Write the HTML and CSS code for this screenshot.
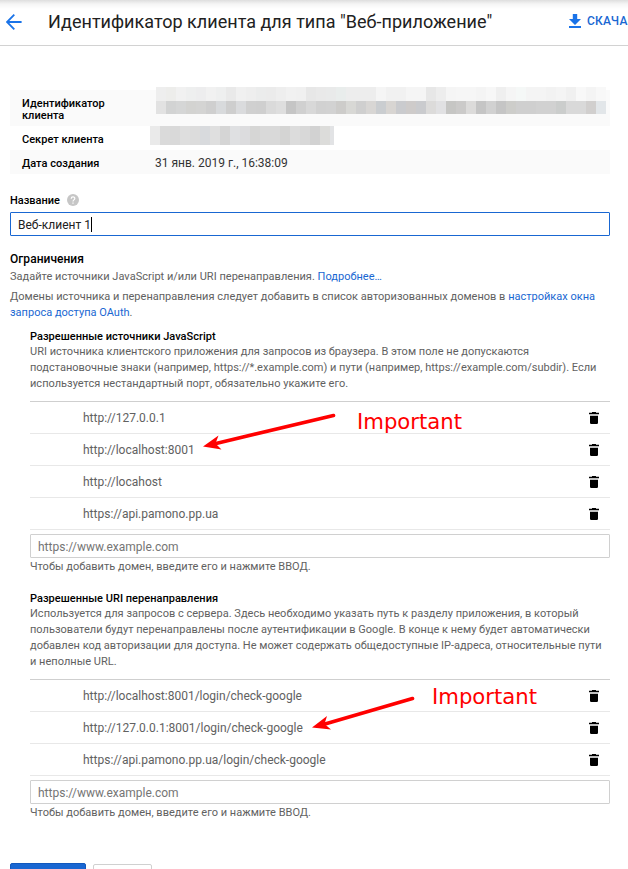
FILE: index.html
```html
<!DOCTYPE html>
<html lang="ru">
<head>
<meta charset="utf-8">
<title>Идентификатор клиента</title>
<link rel="stylesheet" href="styles.css">
</head>
<body>
<svg class="defs" width="0" height="0">
  <symbol id="trash" viewBox="0 0 10 12"><path d="M3 0h4v.7h3v1.600H0V.7h3zM1 3.700h8v7.100q0 1.200-1.200 1.200H2.200Q1 12 1 10.800z"/></symbol>
</svg>
<header class="topbar">
  <svg class="back" width="16" height="16" viewBox="0 0 16 16"><path d="M15.600 8H1.600M8.300 .7L1 8l7.300 7.300" fill="none" stroke="#1a73e8" stroke-width="1.800"/></svg>
  <h1>Идентификатор клиента для типа "Веб-приложение"</h1>
  <a class="download"><svg width="12" height="14" viewBox="0 0 12 14"><path d="M3.800 0h4.400v5H12l-6 6-6-6h3.800zM0 12h12v2H0z" fill="#1a73e8"/></svg><span>СКАЧА</span></a>
</header>
<main>
  <dl class="info">
    <div class="info-row shaded tall"><dt>Идентификатор клиента</dt><dd>
      <svg class="mask mask-id" width="456" height="28" viewBox="0 0 456 28" shape-rendering="crispEdges"></svg>
    </dd></div>
    <div class="info-row"><dt>Секрет клиента</dt><dd>
      <svg class="mask mask-secret" width="184" height="19" viewBox="0 0 184 19" shape-rendering="crispEdges"></svg>
    </dd></div>
    <div class="info-row shaded"><dt>Дата создания</dt><dd>31 янв. 2019 г., 16:38:09</dd></div>
  </dl>
  <div class="label">Название <svg class="help" width="12" height="12" viewBox="0 0 12 12"><circle cx="6" cy="6" r="6" fill="#c6c6c6"/><path d="M4.200 4.700C4.200 2.300 7.800 2.300 7.800 4.600 7.800 5.900 6 5.900 6 7.400M6 8.400v1.300" fill="none" stroke="#fff" stroke-width="1.200"/></svg></div>
  <div class="field focused"><span>Веб-клиент 1</span><i class="caret"></i></div>
  <h2>Ограничения</h2>
  <p class="intro">Задайте источники JavaScript и/или URI перенаправления. <a>Подробнее…</a></p>
  <p class="domains">Домены источника и перенаправления следует добавить в список авторизованных доменов в <a>настройках окна<br>запроса доступа OAuth</a>.</p>
  <section class="origins">
    <h3>Разрешенные источники JavaScript</h3>
    <p>URI источника клиентского приложения для запросов из браузера. В этом поле не допускаются<br>подстановочные знаки (например, https://*.example.com) и пути (например, https://example.com/subdir). Если<br>используется нестандартный порт, обязательно укажите его.</p>
    <ul>
      <li>http://127.0.0.1<svg class="trash"><use href="#trash"/></svg></li>
      <li>http://localhost:8001<svg class="trash"><use href="#trash"/></svg></li>
      <li>http://locahost<svg class="trash"><use href="#trash"/></svg></li>
      <li>https://api.pamono.pp.ua<svg class="trash"><use href="#trash"/></svg></li>
    </ul>
    <div class="field placeholder">https://www.example.com</div>
    <p class="hint">Чтобы добавить домен, введите его и нажмите ВВОД.</p>
  </section>
  <section class="redirects">
    <h3>Разрешенные URI перенаправления</h3>
    <p>Используется для запросов с сервера. Здесь необходимо указать путь к разделу приложения, в который<br>пользователи будут перенаправлены после аутентификации в Google. В конце к нему будет автоматически<br>добавлен код авторизации для доступа. Не может содержать общедоступные IP-адреса, относительные пути<br>и неполные URL.</p>
    <ul>
      <li>http://localhost:8001/login/check-google<svg class="trash"><use href="#trash"/></svg></li>
      <li>http://127.0.0.1:8001/login/check-google<svg class="trash"><use href="#trash"/></svg></li>
      <li>https://api.pamono.pp.ua/login/check-google<svg class="trash"><use href="#trash"/></svg></li>
    </ul>
    <div class="field placeholder">https://www.example.com</div>
    <p class="hint">Чтобы добавить домен, введите его и нажмите ВВОД.</p>
  </section>
  <div class="actions"><span class="btn primary"></span><span class="btn"></span></div>
</main>
<svg class="arrows" width="628" height="869" viewBox="0 0 628 869">
  <path d="M333.500 415.500L216 443.500M412.500 698.500L325 724" stroke="#f00" stroke-width="3.600" stroke-linecap="round"/>
  <path d="M203 446.500L218.500 435.500 215.500 443.500 221.500 449.500zM312 727.500L327 716 324.500 724 331 729.500z" fill="#f00"/>
</svg>
<span class="note note-origin">Important</span>
<span class="note note-redirect">Important</span>
<script src="mask.js"></script>
</body>
</html>
```
FILE: styles.css
```css
* { box-sizing: border-box; }
body { margin: 0; width: 628px; height: 869px; overflow: hidden; position: relative; background: #fff; color: #616161; font: 11px/16px Roboto, sans-serif; }
h1, h2, h3, p, ul, dl, dd { margin: 0; padding: 0; }
a { color: #1967d2; }
.defs { position: absolute; }
.topbar { height: 46px; display: flex; align-items: center; border-bottom: 1px solid #d2d2d2; background: linear-gradient(#dedede, #f5f5f5 4px, #fff 9px); overflow: hidden; }
.back { flex: none; margin: -1px 0 0 6px; }
h1 { width: 521px; flex: none; margin: -1px 0 0 26px; font-size: 18px; line-height: 24px; font-weight: 400; letter-spacing: .02px; color: #212121; white-space: nowrap; }
.download { flex: none; display: flex; gap: 6px; align-items: center; margin-top: -4px; font-size: 12px; font-weight: 500; letter-spacing: .2px; white-space: nowrap; }
main { padding: 44px 18px 0 10px; }
.info-row { height: 24px; display: flex; align-items: center; padding-left: 12px; }
.info-row.tall { height: 36px; }
.shaded { background: #fafafa; }
dt { width: 133px; padding-right: 30px; font-weight: 500; line-height: 12px; letter-spacing: .02px; color: #000; padding-top: 4px; }
dd { position: relative; font-size: 12px; color: #333; padding-top: 2px; }
.mask { position: absolute; }
.mask-id { left: -5px; top: -20px; }
.mask-secret { left: -5px; top: -11px; }
.label { height: 16px; margin-top: 19px; display: flex; gap: 7px; align-items: center; font-weight: 500; color: #000; }
.help { margin-top: -2px; }
.field { height: 24px; display: flex; align-items: center; padding: 1px 7px 0; border: 1px solid #d0d0d0; border-radius: 1px; font-size: 12px; color: #757575; }
.focused { margin-top: 3px; border-color: #1967d2; color: #212121; }
.caret { width: 1px; height: 15px; background: #000; }
h2 { margin-top: 15px; font-size: 12px; line-height: 16px; font-weight: 500; letter-spacing: .03px; color: #000; }
p { white-space: nowrap; letter-spacing: .017px; }
.intro { margin-top: 2px; }
.domains { margin-top: 4px; letter-spacing: .008px; }
section { margin-left: 20px; }
h3 { font-size: 11px; line-height: 14px; font-weight: 500; letter-spacing: .02px; color: #000; }
.origins { margin-top: 9px; }
.origins p { letter-spacing: .01px; }
.redirects { margin-top: 17px; }
ul { list-style: none; margin: 9px 0 4px; border-top: 1px solid #cfcfcf; }
li { height: 32px; display: flex; align-items: center; justify-content: space-between; padding: 0 11px 0 53px; border-bottom: 1px solid #e8e8e8; font-size: 12px; }
.trash { width: 10px; height: 12px; margin-top: 1px; fill: #000; }
.hint { margin-top: 1px; }
.actions { display: flex; gap: 7px; align-items: flex-start; margin-top: 42px; }
.btn { width: 59px; height: 28px; margin-top: 1px; border: 1px solid #d0d0d0; border-radius: 2px; }
.primary { width: 76px; margin-top: 0; background: #1967d2; border-color: #1259bd; }
.arrows { position: absolute; left: 0; top: 0; }
.note { position: absolute; font: 21.2px/26px "DejaVu Sans", sans-serif; color: #f00; }
.note-origin { left: 357px; top: 409px; }
.note-redirect { left: 432px; top: 684px; }
```
FILE: mask.js
```js
// Fills the redacted values with rows of grey blocks.
function drawBlocks(svg, colors, x, y, height) {
  colors.split(' ').forEach((color, i) => {
    const rect = document.createElementNS('http://www.w3.org/2000/svg', 'rect');
    rect.setAttribute('x', x + i * 10);
    rect.setAttribute('y', y);
    rect.setAttribute('width', 10);
    rect.setAttribute('height', height);
    rect.setAttribute('fill', '#' + color);
    svg.appendChild(rect);
  });
}
const id = document.querySelector('.mask-id');
drawBlocks(id, 'eeeeee ededeb f1f1f1 eeefef ededee f1f1f1 eeefef e9e9e9 f0f0f0 eeeeee ebecec ebebeb eeeeee f1f1f1 f0f0f0 e7e7e7 e9e9e9 e9eaea e9edec ededed ededed ededed f5f5f5 f1f1f1 f1f1f1 f5f5f5 f5f5f5 e7e7e7 ededed f5f5f5 f6f6f6 f6f6f6 f4f4f4 f7f7f7 efefef f5f5f5 f5f8f7 f4f4f4 f4f4f4 f2f2f2 f4f4f4 f0f0f0 f8f8f8 f4f4f4 f8f8f8', 5.500, 0, 14);
drawBlocks(id, 'e2e2e2 d2d3d3 d5d6d6 d3d3d1 d4d4d3 cfcfcf d8dadc cecece dadbdd d0d0d0 cfcfcf dadada dedede c5c5c5 d0d0d0 d8d8d8 d1d1d1 d2d2d2 cdccca d8d8d5 cfcfcf d8d6d4 cacdd0 d8d5d2 cacbce cecbca cacbce dcdbda e1e1e3 c6c6c4 cbcac9 dcdbda c5c5c5 d1d1d1 c5c5c5 cdcdca cfcfcf cfcfcf d1d1d1 d1d1d1 cbcdcc d9d9d9 d9d9d9 d1cfce e2e6e9', 5.500, 14, 13);
const secret = document.querySelector('.mask-secret');
drawBlocks(secret, 'eaeaea dadada d9d9d9 dedede dcdcdc d8dadd dfdfdf d5d5d5 dfe0e2 dcdcde d6d6d5 d9d9d9 d9d9d9 d4d4d3 dcdcdc d8d8d8 d2d2d2 dcdcda e2e3e5', 0, 0, 19);
```
